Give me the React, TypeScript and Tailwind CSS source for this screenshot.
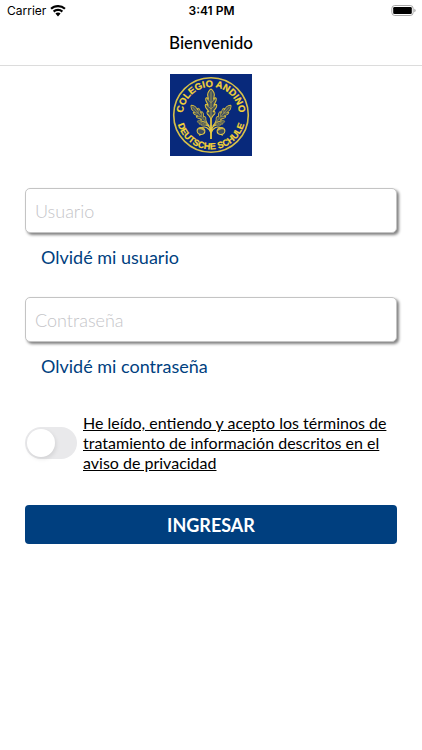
import { useState } from "react";

const fields = [
  {
    id: "usuario",
    label: "Usuario",
    type: "text",
    forgot: "Olvidé mi usuario",
  },
  {
    id: "contrasena",
    label: "Contraseña",
    type: "password",
    forgot: "Olvidé mi contraseña",
  },
];

function WifiIcon() {
  return (
    <svg width="16" height="12" viewBox="0 0 16 12" aria-hidden="true">
      <path
        d="M8 0C5 0 2.3 1.1.3 3l1.5 1.6A9 9 0 0 1 8 2.2a9 9 0 0 1 6.2 2.4L15.7 3A11.200 11.200 0 0 0 8 0Z"
        fill="#000"
      />
      <path
        d="M8 3.800c-2 0-3.800.8-5.100 2l1.500 1.600A5.200 5.200 0 0 1 8 6c1.400 0 2.600.5 3.600 1.400l1.500-1.600A7.400 7.400 0 0 0 8 3.800Z"
        fill="#000"
      />
      <path
        d="M8 7.600c-1 0-1.900.4-2.600 1L8 11.400l2.600-2.800c-.7-.6-1.600-1-2.600-1Z"
        fill="#000"
      />
    </svg>
  );
}

function BatteryIcon() {
  return (
    <svg width="25" height="12" viewBox="0 0 25 12" aria-hidden="true">
      <rect x=".8" y=".5" width="21.400" height="10" rx="3" fill="#fff" stroke="#a8a8a8" />
      <rect x="2.200" y="2" width="18.600" height="7" rx="1.300" fill="#000" />
      <path d="M23.400 3.800v3.400c.7-.3 1.200-.9 1.200-1.700s-.5-1.400-1.200-1.700Z" fill="#9a9a9a" />
    </svg>
  );
}

function OakLeaf() {
  return (
    <>
      <path
        d="M0 0C-.5-2-1.500-3-2.500-4C-4-4.500-4.500-6-3.500-7C-3-7.500-2.500-7-2-6.500C-3-8.500-5.500-9-5.800-11.500C-5.800-13-4-13-2.800-11.500C-3.300-14-5.500-14.500-5.300-17C-5-18.500-3.300-18-2.500-16.500C-2.800-19-4-20-3-22C-2.400-23-1.500-24.500 0-25C1.500-24.500 2.400-23 3-22C4-20 2.800-19 2.500-16.500C3.300-18 5-18.500 5.300-17C5.500-14.500 3.300-14 2.800-11.500C4-13 5.800-13 5.800-11.500C5.500-9 3-8.500 2-6.500C2.500-7 3-7.500 3.500-7C4.500-6 4-4.500 2.500-4C1.500-3 .5-2 0 0Z"
        fill="#3e4f60"
        stroke="#e0c43c"
        strokeWidth="1"
      />
      <path
        d="M0 4V-23M0-9l-4.500-3M0-9l4.500-3M0-14l-4-3M0-14l4-3"
        fill="none"
        stroke="#b5a652"
        strokeWidth=".7"
      />
    </>
  );
}

function Acorn() {
  return (
    <>
      <ellipse rx="3.900" ry="3.500" fill="#3a4b62" stroke="#e8cc42" strokeWidth="1.100" />
      <path d="M-3.900-.6C-3-4.800 3-4.800 3.900-.6 1-1.800-1-1.800-3.900-.6Z" fill="#c9b34b" />
      <path d="M0 3.500v1.500" stroke="#e8cc42" strokeWidth="1" />
    </>
  );
}

function SchoolCrest() {
  return (
    <svg
      width="82"
      height="82"
      viewBox="0 0 82 82"
      role="img"
      aria-label="Colegio Andino Deutsche Schule"
    >
      <defs>
        <path id="arc-top" d="M13 44V41a28 28 0 0 1 56 0V44" />
        <path id="arc-bottom" d="M6.500 41a34.500 34.500 0 0 0 69 0" />
      </defs>
      <rect width="82" height="82" fill="#08297b" />
      <circle cx="41" cy="41" r="37.300" fill="none" stroke="#d6bf4a" strokeWidth="1.600" />
      <g
        fill="#f6d535"
        stroke="#f6d535"
        strokeWidth=".2"
        fontFamily="'Liberation Sans', Arial, sans-serif"
        fontWeight="700"
        textAnchor="middle"
      >
        <text fontSize="9.500">
          <textPath href="#arc-top" startOffset="50%">
            COLEGIO ANDINO
          </textPath>
        </text>
        <text fontSize="9">
          <textPath href="#arc-bottom" startOffset="50%">
            DEUTSCHE SCHULE
          </textPath>
        </text>
      </g>

      {/* Stems */}
      <g fill="none" stroke="#e8cc42" strokeWidth="1.100">
        <path d="M41 40v25" strokeWidth="1.800" />
        <path d="M41 57c-1-3-2-6-5-9M41 57c1-3 2-6 5-9M41 59c-2-6-7-7-10-5M41 59c2-6 7-7 10-5M41 55c-2-3-4-4-8-5M41 55c2-3 4-4 8-5" />
      </g>
      <g transform="translate(37 51) rotate(-68) scale(.42)">
        <OakLeaf />
      </g>
      <g transform="translate(45 51) rotate(68) scale(.42)">
        <OakLeaf />
      </g>
      <g transform="translate(37 49) rotate(-42) scale(.7 .95)">
        <OakLeaf />
      </g>
      <g transform="translate(45 49) rotate(42) scale(.7 .95)">
        <OakLeaf />
      </g>
      <g transform="translate(41 46) scale(1 1.240)">
        <OakLeaf />
      </g>
      <g transform="translate(31 57) rotate(15)">
        <Acorn />
      </g>
      <g transform="translate(51 57) rotate(-15)">
        <Acorn />
      </g>
    </svg>
  );
}

export default function App() {
  const [accepted, setAccepted] = useState(false);

  return (
    <div className="min-h-screen bg-white font-[Lato,sans-serif] text-black">
      {/* Status bar */}
      <div className="grid h-[22px] grid-cols-3 items-center pr-[6px] pl-[7px] font-[Inter,sans-serif] text-xs">
        <div className="flex items-center gap-1">
          <span>Carrier</span>
          <WifiIcon />
        </div>
        <span className="text-center font-semibold">3:41 PM</span>
        <div className="flex justify-end">
          <BatteryIcon />
        </div>
      </div>

      <header className="flex h-11 items-center justify-center border-b border-[#dcdcdc] pb-[2px]">
        <h1 className="text-[17px] font-medium">Bienvenido</h1>
      </header>

      <main className="px-[25px] pt-2">
        <div className="flex justify-center">
          <SchoolCrest />
        </div>

        <form className="pt-8" onSubmit={(e) => e.preventDefault()}>
          {fields.map((field) => (
            <div key={field.id} className="mb-[26px]">
              <input
                id={field.id}
                type={field.type}
                aria-label={field.label}
                placeholder={field.label}
                className="block h-[45px] w-full rounded-[5px] border border-[#c4c4c4] bg-white px-[9px] text-lg font-light shadow-[2px_2px_3px_#808080] outline-none placeholder:text-[#c4c4c8]"
              />
              <a
                href="#"
                className="mt-[11px] ml-4 inline-block text-lg leading-[27px] text-[#003f7f]"
              >
                {field.forgot}
              </a>
            </div>
          ))}

          <div className="mt-[33px] flex items-center gap-[6px]">
            <input
              id="terminos"
              type="checkbox"
              role="switch"
              checked={accepted}
              onChange={(e) => setAccepted(e.target.checked)}
              className="h-8 w-[52px] shrink-0 cursor-pointer appearance-none rounded-full bg-[#e9e9eb] p-[2px] transition-colors before:block before:size-7 before:rounded-full before:bg-white before:shadow-[1px_2px_4px_rgba(0,0,0,0.1)] before:transition-transform checked:bg-[#34c759] checked:before:translate-x-5"
            />
            <label htmlFor="terminos" className="text-base leading-5 underline">
              He leído, entiendo y acepto los términos de tratamiento de
              información descritos en el aviso de privacidad
            </label>
          </div>

          <button
            type="submit"
            className="mt-8 h-[39px] w-full cursor-pointer rounded bg-[#003f7f] text-lg font-bold text-white"
          >
            INGRESAR
          </button>
        </form>
      </main>
    </div>
  );
}
